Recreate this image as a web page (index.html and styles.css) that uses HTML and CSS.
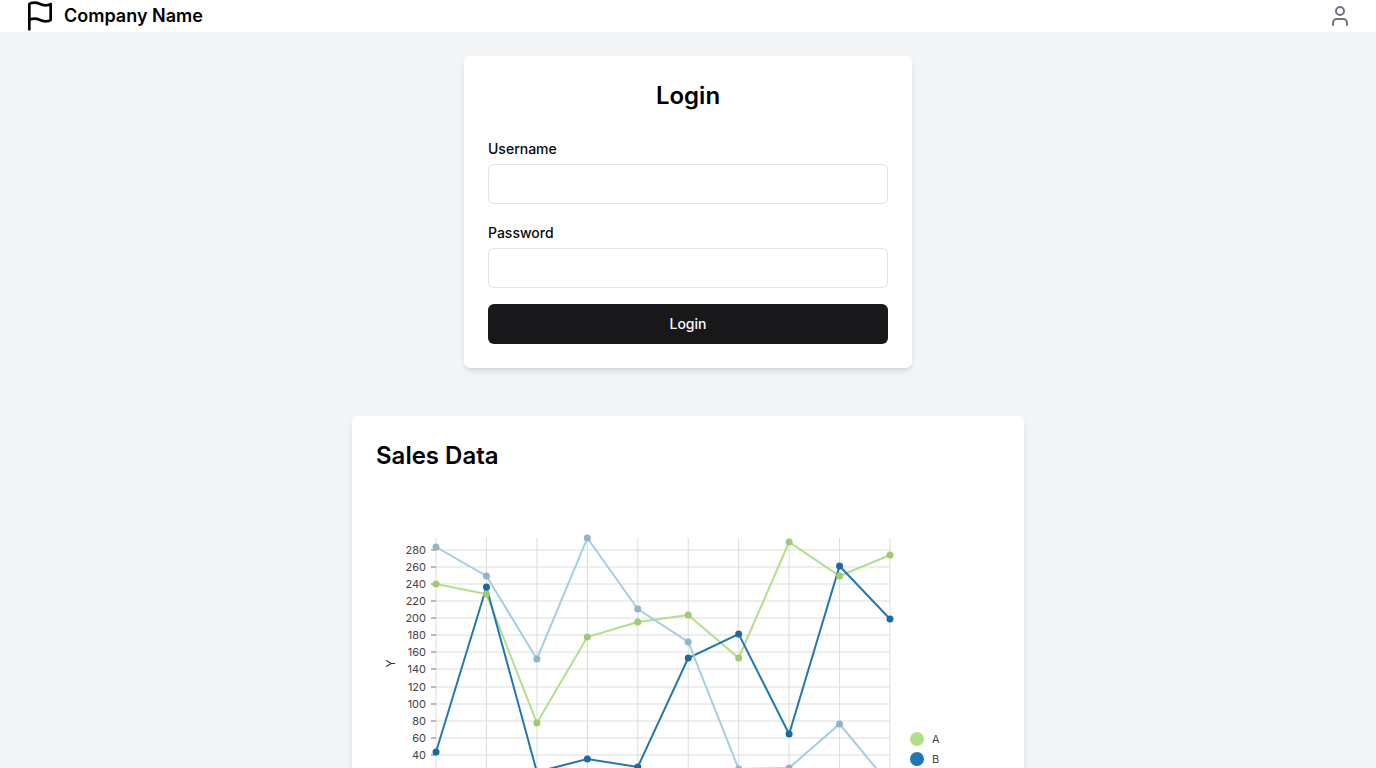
FILE: index.html
```html
<!DOCTYPE html>
<html lang="en">
<head>
<meta charset="utf-8">
<meta name="viewport" content="width=device-width, initial-scale=1">
<title>Company Name</title>
<link rel="stylesheet" href="styles.css">
</head>
<body>
<header class="topbar">
  <a class="brand" href="#">
    <svg class="brand-icon" viewBox="0 0 24 24" aria-hidden="true"><path d="M4 15s1-1 4-1 5 2 8 2 4-1 4-1V3s-1 1-4 1-5-2-8-2-4 1-4 1z"/><path d="M4 22v-7"/></svg>
    <span>Company Name</span>
  </a>
  <button class="user-button" type="button" aria-label="Account">
    <svg class="user-icon" viewBox="0 0 24 24" aria-hidden="true"><path d="M19 21v-2a4 4 0 0 0-4-4H9a4 4 0 0 0-4 4v2"/><circle cx="12" cy="7" r="4"/></svg>
  </button>
</header>
<main class="content">
  <section class="card login-card">
    <h2 class="card-title login-title">Login</h2>
    <form class="login-form">
      <div class="field">
        <label class="field-label" for="username">Username</label>
        <input class="field-input" id="username" type="text">
      </div>
      <div class="field">
        <label class="field-label" for="password">Password</label>
        <input class="field-input" id="password" type="password">
      </div>
      <button class="submit" type="button">Login</button>
    </form>
  </section>
  <section class="card sales-card">
    <h2 class="card-title">Sales Data</h2>
    <svg class="chart" viewBox="0 0 624 351" role="img" aria-label="Sales data line chart">
      <g id="plot" transform="translate(60 50)"></g>
    </svg>
  </section>
</main>
<script src="chart.js"></script>
</body>
</html>
```
FILE: styles.css
```css
*, *::before, *::after { box-sizing: border-box; }
body {
  margin: 0;
  background: #f3f4f6;
  color: #09090b;
  font-family: Inter, "Liberation Sans", sans-serif;
  font-size: 16px;
  line-height: 24px;
}
.topbar {
  display: flex;
  align-items: center;
  justify-content: space-between;
  padding: 0 24px;
  background: #fff;
}
.brand {
  display: flex;
  align-items: center;
  gap: 8px;
  color: #000;
  font-size: 18px;
  font-weight: 600;
  line-height: 28px;
  text-decoration: none;
}
.brand-icon, .user-icon {
  display: block;
  fill: none;
  stroke: currentColor;
  stroke-width: 2;
  stroke-linecap: round;
  stroke-linejoin: round;
}
.brand-icon { width: 32px; height: 32px; }
.user-icon { width: 24px; height: 24px; }
.user-button {
  padding: 0;
  border: 0;
  background: none;
  color: #6b7280;
}
.content {
  display: flex;
  flex-direction: column;
  align-items: center;
  gap: 48px;
  padding: 24px;
}
.card {
  width: 100%;
  padding: 24px;
  border-radius: 6px;
  background: #fff;
  box-shadow: 0 4px 6px -1px rgb(0 0 0 / 10%), 0 2px 4px -2px rgb(0 0 0 / 10%);
}
.login-card { max-width: 448px; }
.sales-card { max-width: 672px; }
.card-title {
  margin: 0 0 16px;
  color: #000;
  font-size: 24px;
  font-weight: 600;
  line-height: 32px;
}
.login-title { margin-bottom: 24px; text-align: center; }
.login-form { display: flex; flex-direction: column; gap: 16px; }
.field-label { font-size: 14px; font-weight: 500; line-height: 14px; }
.field-input {
  display: block;
  width: 100%;
  height: 40px;
  margin: 4px 0 0;
  padding: 8px 12px;
  border: 1px solid #e4e4e7;
  border-radius: 6px;
  background: #fff;
  font: inherit;
  font-size: 14px;
}
.submit {
  height: 40px;
  border: 0;
  border-radius: 6px;
  background: #18181b;
  color: #fafafa;
  font: inherit;
  font-size: 14px;
  font-weight: 500;
}
.chart { display: block; width: 100%; height: auto; }
.grid { stroke: #ddd; stroke-width: 1; }
.tick { stroke: #777; stroke-width: 1; }
.tick-label, .legend-label { fill: #444; font-size: 11px; dominant-baseline: central; }
.tick-label { text-anchor: end; }
.tick-label-x { text-anchor: middle; }
.axis-title { fill: #333; font-size: 12px; text-anchor: middle; }
.line { fill: none; stroke-width: 2; }
```
FILE: chart.js
```js
const plot = document.getElementById("plot");
const width = 454;
const height = 251;
const series = [
  { id: "A", color: "#b2df8a", dot: "#9fc973", y: [46, 56, 185, 99, 84, 77, 120, 4, 38, 17] },
  { id: "B", color: "#1f78b4", dot: "#1b6ba2", y: [214, 49, 234, 221, 229, 120, 96, 196, 28, 81] },
  { id: "C", color: "#a6cee3", dot: "#8fb5c9", y: [9, 38, 121, 0, 71, 104, 231, 230, 186, 247] }
];

function add(tag, attrs, text) {
  const node = document.createElementNS("http://www.w3.org/2000/svg", tag);
  for (const [key, value] of Object.entries(attrs)) node.setAttribute(key, value);
  if (text !== undefined) node.textContent = text;
  plot.appendChild(node);
}

const xAt = (i) => (i * width) / 9;
const yAt = (value) => Math.round(height - (value * height) / 294);

for (let i = 0; i < 10; i++) {
  add("line", { class: "grid", x1: xAt(i), x2: xAt(i), y1: 0, y2: height });
}
for (let value = 0; value <= 280; value += 20) {
  const y = yAt(value);
  add("line", { class: "grid", x1: 0, x2: width, y1: y, y2: y });
  add("line", { class: "tick", x1: -5, x2: 0, y1: y, y2: y });
  add("text", { class: "tick-label", x: -10, y: y }, value);
}
for (let i = 0; i < 10; i++) {
  add("line", { class: "tick", x1: xAt(i), x2: xAt(i), y1: height, y2: height + 5 });
  add("text", { class: "tick-label tick-label-x", x: xAt(i), y: height + 16 }, i + 1);
}
add("text", { class: "axis-title", transform: `translate(-41 ${height / 2}) rotate(-90)` }, "Y");

for (const s of series) {
  add("polyline", { class: "line", stroke: s.color, points: s.y.map((y, i) => `${xAt(i)},${y}`).join(" ") });
}
for (const s of [...series].reverse()) {
  s.y.forEach((y, i) => add("circle", { cx: xAt(i), cy: y, r: 3.5, fill: s.dot }));
}
series.forEach((s, i) => {
  const y = height - 50 + i * 20;
  add("circle", { cx: width + 27, cy: y, r: 7, fill: s.color });
  add("text", { class: "legend-label", x: width + 42, y: y }, s.id);
});
```
